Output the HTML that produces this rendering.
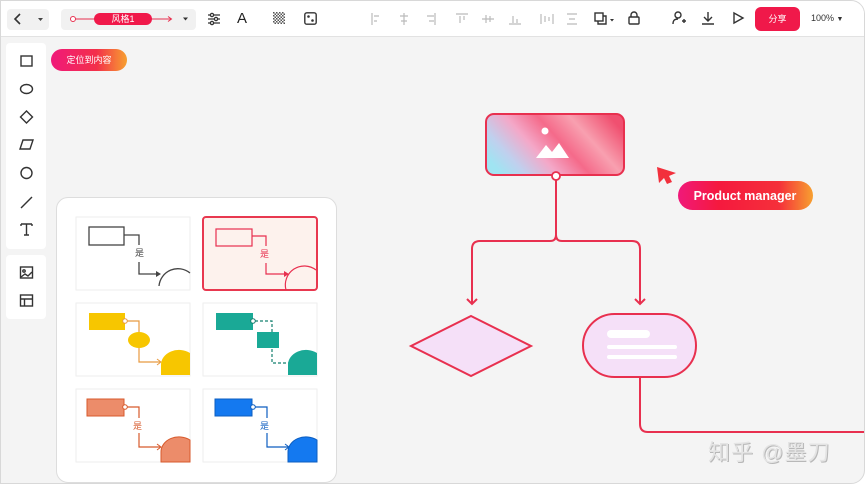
<!DOCTYPE html>
<html><head><meta charset="utf-8"><style>
*{margin:0;padding:0;box-sizing:border-box}
body{width:865px;height:484px;overflow:hidden;background:#fff;font-family:"Liberation Sans","Noto Sans CJK SC",sans-serif}
#app{position:absolute;left:0;top:0;width:865px;height:484px;background:#f4f4f4;border:1px solid #d8d8d8;border-radius:0 14px 14px 0;overflow:hidden}
#top{position:absolute;left:0;top:0;width:865px;height:36px;background:#fff;border-bottom:1px solid #e2e2e2}
.ic{position:absolute}
.cj{font-family:"WenQuanYi Zen Hei","Noto Sans CJK SC",sans-serif;font-size:9px;line-height:10px}
</style></head><body><div id="app">
<div id="top">
 <div style="position:absolute;left:6px;top:8px;width:42px;height:21px;background:#f1f1f1;border-radius:4px"></div>
 <svg class="ic" style="left:10px;top:10px" width="36" height="16"><path d="M9 3 L4 8 L9 13" fill="none" stroke="#333" stroke-width="1.6"/><path d="M27 7 h5 l-2.5 3z" fill="#444"/></svg>
 <div style="position:absolute;left:60px;top:8px;width:135px;height:21px;background:#f1f1f1;border-radius:4px"></div>
 <svg class="ic" style="left:66px;top:10px" width="130" height="16"><circle cx="6" cy="8" r="2.5" fill="#fff" stroke="#e8304f"/><line x1="8.5" y1="8" x2="28" y2="8" stroke="#e8304f"/><rect x="27" y="2" width="58" height="12" rx="6" fill="#f0194a"/><line x1="85" y1="8" x2="104" y2="8" stroke="#e8304f"/><path d="M101 5.5 L104.5 8 L101 10.5" fill="none" stroke="#e8304f"/><path d="M116 6.5 h5 l-2.5 3z" fill="#333"/></svg>
 <div style="position:absolute;left:93px;top:11px;width:58px;text-align:center;color:#fff;font-size:9px;line-height:14px">风格1</div>
 <svg class="ic" style="left:205px;top:10px" width="16" height="16" fill="none" stroke="#333" stroke-width="1.3"><path d="M2 4h12M2 8h12M2 12h12"/><circle cx="6" cy="4" r="1.6" fill="#fff"/><circle cx="10" cy="8" r="1.6" fill="#fff"/><circle cx="6" cy="12" r="1.6" fill="#fff"/></svg>
 <div style="position:absolute;left:236px;top:9px;font-size:15px;color:#222">A</div>
 <svg class="ic" style="left:272px;top:11px" width="12" height="12"><pattern id="ck" width="3" height="3" patternUnits="userSpaceOnUse"><rect width="1.5" height="1.5" fill="#555"/><rect x="1.5" y="1.5" width="1.5" height="1.5" fill="#555"/></pattern><rect width="12" height="12" fill="url(#ck)"/></svg>
 <svg class="ic" style="left:303px;top:11px" width="13" height="13"><rect x="0.8" y="0.8" width="11.4" height="11.4" rx="2" fill="none" stroke="#333" stroke-width="1.4"/><circle cx="4.5" cy="4.5" r="1.3" fill="#333"/><circle cx="8.5" cy="8.5" r="1.3" fill="#333"/></svg>
 <svg class="ic" style="left:368px;top:10px" width="220" height="16" stroke="#bbb" stroke-width="1.2" fill="none">
  <path d="M3 2v12M5 5h5M5 10h3"/><path d="M35 2v12M31 5h8M32 10h6"/><path d="M66 2v12M58 5h7M60 10h5"/>
  <path d="M87 3h12M91 5v7M95 5v4"/><path d="M113 8h12M117 4v8M121 5v6"/><path d="M140 13h12M144 5v7M148 8v4"/>
  <path d="M172 3v10M184 3v10M176 5v6M180 6v4"/><path d="M198 3h10M198 13h10M200 8h6"/></svg>
 <svg class="ic" style="left:592px;top:10px" width="22" height="16" fill="none" stroke="#333" stroke-width="1.4"><rect x="2" y="2" width="8" height="8"/><path d="M5 10v3h8V5h-3"/><path d="M17 8h4l-2 2.5z" fill="#333" stroke="none"/></svg>
 <svg class="ic" style="left:626px;top:9px" width="14" height="16" fill="none" stroke="#333" stroke-width="1.4"><rect x="2" y="7" width="10" height="7" rx="1"/><path d="M4 7V5a3 3 0 0 1 6 0v2"/></svg>
 <svg class="ic" style="left:670px;top:9px" width="16" height="16" fill="none" stroke="#333" stroke-width="1.4"><circle cx="7" cy="5" r="3"/><path d="M2 14c0-4 2-5 5-5"/><path d="M11 11h4M13 9v4"/></svg>
 <svg class="ic" style="left:699px;top:9px" width="16" height="16" fill="none" stroke="#333" stroke-width="1.4"><path d="M8 2v9M4 7l4 4 4-4M2 14h12"/></svg>
 <svg class="ic" style="left:730px;top:10px" width="14" height="14" fill="none" stroke="#333" stroke-width="1.4"><path d="M3 2l9 5-9 5z"/></svg>
 <div style="position:absolute;left:754px;top:6px;width:45px;height:24px;background:#f0194a;border-radius:6px;color:#fff;font-size:9px;text-align:center;line-height:24px">分享</div>
 <div style="position:absolute;left:810px;top:12px;font-size:9px;color:#333">100% <span style="font-size:7px">▼</span></div>
</div>
<div style="position:absolute;left:5px;top:42px;width:40px;height:206px;background:#fff;border-radius:4px"></div>
<div style="position:absolute;left:5px;top:254px;width:40px;height:64px;background:#fff;border-radius:4px"></div>
<svg class="ic" style="left:15px;top:50px" width="22" height="265" fill="none" stroke="#333" stroke-width="1.4">
 <rect x="5" y="5" width="11" height="10"/>
 <ellipse cx="10.5" cy="38" rx="6" ry="4.5"/>
 <path d="M10.5 60l6 6-6 6-6-6z"/>
 <path d="M7 89h10l-3 9H4z"/>
 <circle cx="10.5" cy="122" r="5.5"/>
 <path d="M5 157l11-11"/>
 <path d="M5 173h11M10.5 173v11M8 184h5M5 173v2M16 173v2"/>
 <rect x="4.5" y="216" width="12" height="11"/><circle cx="8" cy="220" r="1.2"/><path d="M5 226l4-3 3 2 4-4"/>
 <rect x="4.5" y="244" width="12" height="11"/><path d="M4.5 248h12M8.5 248v7"/>
</svg>
<div style="position:absolute;left:50px;top:48px;width:76px;height:22px;border-radius:11px;background:linear-gradient(90deg,#f0197a,#f3304a 60%,#f7a030);color:#fff;font-size:9px;line-height:22px;text-align:center">定位到内容</div>
<div style="position:absolute;left:55px;top:196px;width:281px;height:286px;background:#fff;border:1px solid #ddd;border-radius:12px"></div>
<svg class="ic" style="left:55px;top:196px" width="281" height="286">
 <g stroke="#eee" fill="#fff"><rect x="20" y="20" width="114" height="73"/><rect x="20" y="106" width="114" height="73"/><rect x="147" y="106" width="114" height="73"/><rect x="20" y="192" width="114" height="73"/><rect x="147" y="192" width="114" height="73"/></g>
 <rect x="147" y="20" width="114" height="73" rx="3" fill="#fdf2ed" stroke="#e8384f" stroke-width="2"/>
 <g fill="none" stroke="#444" stroke-width="1.3"><rect x="33" y="30" width="35" height="18"/><path d="M68 38h15v10M83 65v12h20"/><path d="M103 89a19 19 0 0 1 31-13" /></g>
 <path d="M100 74l5 3-5 3z" fill="#444"/>
 <g fill="none" stroke="#e8304f" stroke-width="1.2"><rect x="160" y="32" width="36" height="17"/><path d="M196 39h14v10M210 66v11h20"/><path d="M230 93a19 19 0 0 1 30-20"/></g>
 <path d="M228 74l5 3-5 3z" fill="#e8304f"/>
 <rect x="33" y="116" width="36" height="17" fill="#f7c600"/><circle cx="69" cy="124" r="2.3" fill="#fff" stroke="#e89a40"/>
 <path d="M71 124h12v11M83 151v14h21" fill="none" stroke="#e89a40" stroke-width="1.2"/><ellipse cx="83" cy="143" rx="11" ry="8" fill="#f7c600"/>
 <path d="M101 162l4 3-4 3" fill="none" stroke="#e89a40"/><path d="M105 178v-10a18 15 0 0 1 29-12v22z" fill="#f7c600"/>
 <rect x="160" y="116" width="37" height="17" fill="#1aa996"/><circle cx="197" cy="124" r="2.3" fill="#fff" stroke="#14806f"/>
 <path d="M199 124h17v11M216 152v14h21" fill="none" stroke="#14806f" stroke-width="1.2" stroke-dasharray="3 2"/><rect x="201" y="135" width="22" height="16" fill="#1aa996"/>
 <path d="M234 163l4 3-4 3" fill="none" stroke="#14806f"/><path d="M232 178v-10a18 15 0 0 1 29-12v22z" fill="#1aa996"/>
 <rect x="31" y="202" width="37" height="17" fill="#ec8c6a" stroke="#d75a2c"/><circle cx="69" cy="210" r="2.3" fill="#fff" stroke="#d75a2c"/>
 <path d="M71 210h12v11M83 236v14h21" fill="none" stroke="#d75a2c" stroke-width="1.2"/>
 <path d="M101 247l4 3-4 3" fill="none" stroke="#d75a2c"/><path d="M105 265v-10a18 15 0 0 1 29-12v22z" fill="#ec8c6a" stroke="#d75a2c"/>
 <rect x="159" y="202" width="37" height="17" fill="#1479f0" stroke="#0d5ec0"/><circle cx="197" cy="210" r="2.3" fill="#fff" stroke="#0d5ec0"/>
 <path d="M199 210h12v11M211 236v14h21" fill="none" stroke="#0d5ec0" stroke-width="1.2"/>
 <path d="M229 247l4 3-4 3" fill="none" stroke="#0d5ec0"/><path d="M232 265v-10a18 15 0 0 1 29-12v22z" fill="#1479f0" stroke="#0d5ec0"/>
</svg>
<div class="cj" style="position:absolute;left:134px;top:247px;color:#444">是</div>
<div class="cj" style="position:absolute;left:259px;top:248px;color:#e8304f">是</div>
<div class="cj" style="position:absolute;left:132px;top:420px;color:#d75a2c">是</div>
<div class="cj" style="position:absolute;left:259px;top:420px;color:#0d5ec0">是</div>
<svg class="ic" style="left:0;top:0" width="865" height="484">
 <defs><linearGradient id="g1" x1="0" y1="0.7" x2="1" y2="0.3"><stop offset="0" stop-color="#a0e4f2"/><stop offset="0.15" stop-color="#c0d0ee"/><stop offset="0.35" stop-color="#f4a8c8"/><stop offset="0.55" stop-color="#f56a8a"/><stop offset="0.75" stop-color="#f8a0b0"/><stop offset="1" stop-color="#f05070"/></linearGradient>
 <linearGradient id="g2" x1="0" x2="1"><stop offset="0" stop-color="#f0197a"/><stop offset="0.3" stop-color="#f5193e"/><stop offset="0.75" stop-color="#f5303a"/><stop offset="1" stop-color="#f7a030"/></linearGradient></defs>
 <rect x="485" y="113" width="138" height="61" rx="8" fill="url(#g1)" stroke="#e8304f" stroke-width="2"/>
 <circle cx="544" cy="130" r="3.5" fill="#fff"/><path d="M535 157l10-13 6 7 7-9 10 15z" fill="#fff"/>
 <g fill="none" stroke="#e8304f" stroke-width="2">
  <path d="M555 179v55q0 6-6 6h-70q-8 0-8 8v54"/><path d="M555 234q0 6 6 6h70q8 0 8 8v54"/>
  <path d="M466 298l5 5 5-5M634 298l5 5 5-5"/>
  <path d="M639 376v47q0 8 8 8h218"/>
 </g>
 <circle cx="555" cy="175" r="4" fill="#fff" stroke="#e8304f" stroke-width="1.8"/>
 <path d="M470 315l60 30-60 30-60-30z" fill="#f5e0f8" stroke="#e8304f" stroke-width="2"/>
 <rect x="582" y="313" width="113" height="63" rx="31.5" fill="#f5e0f8" stroke="#e8304f" stroke-width="2"/>
 <rect x="606" y="329" width="43" height="8" rx="4" fill="#fff"/><rect x="606" y="344" width="70" height="4" rx="2" fill="#fff"/><rect x="606" y="354" width="70" height="4" rx="2" fill="#fff"/>
 <path d="M656 166l19 6-7 3 3 6-5 2-3-6-5 5z" fill="#f2303c"/>
 <rect x="677" y="180" width="135" height="29" rx="14.5" fill="url(#g2)"/>
 <text x="744" y="199" text-anchor="middle" fill="#fff" font-size="12.5" font-weight="bold" font-family="Liberation Sans,sans-serif">Product manager</text>
</svg>
<div style="position:absolute;left:707px;top:434px;font-size:22px;color:#e4e4e4;text-shadow:1px 1px 0 #b8b8b8;letter-spacing:1px">知乎 @墨刀</div>
</div></body></html>
